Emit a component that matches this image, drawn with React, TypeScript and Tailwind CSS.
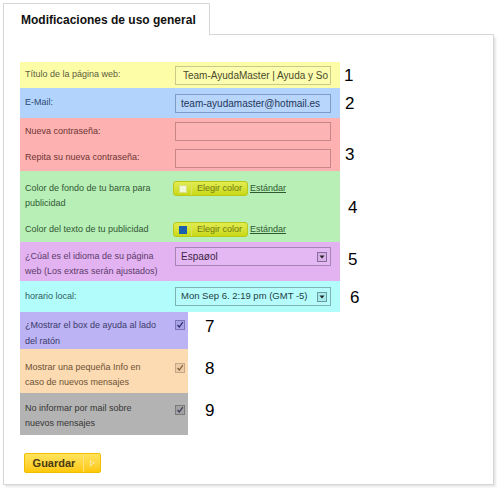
import React from "react";

const Field = ({ value, cls, pl = "pl-[5px]" }: { value?: string; cls: string; pl?: string }) => (
  <input
    readOnly
    value={value ?? ""}
    className={`w-[156px] h-[19px] border text-[10px] ${pl} pr-[2px] outline-none overflow-hidden ${cls}`}
  />
);

const SelectBox = ({ value, cls, arrow, size = "text-[10px]" }: { value: string; cls: string; arrow: string; size?: string }) => (
  <div className={`w-[156px] h-[19px] border flex items-center pl-[5px] pr-[3px] ${cls}`}>
    <span className={`flex-1 whitespace-nowrap overflow-hidden ${size}`}>{value}</span>
    <span className={`w-[10px] h-[10px] border flex items-center justify-center ${arrow}`}>
      <svg width="6" height="4" viewBox="0 0 6 4">
        <path d="M0.5 0.5 L5.5 0.5 L3 3.5 Z" fill="#222" />
      </svg>
    </span>
  </div>
);

const Check = ({ cls, mark }: { cls: string; mark: string }) => (
  <span className={`w-[10px] h-[10px] border flex items-center justify-center ${cls}`}>
    <svg width="8" height="8" viewBox="0 0 8 8">
      <path d="M1.5 4 L3.3 6 L6.8 1.2" fill="none" stroke={mark} strokeWidth="1.2" />
    </svg>
  </span>
);

const ColorButton = ({ swatch }: { swatch: string }) => (
  <div className="flex items-center">
    <div className="w-[75px] h-[15px] rounded-[3px] border border-[#b9c81a] bg-gradient-to-b from-[#e2ec4e] to-[#c9d912] flex items-center">
      <span className="w-[18px] h-full flex items-center justify-center border-r border-[#d9e560]">
        <span className={`w-[8px] h-[8px] ${swatch}`} />
      </span>
      <span className="flex-1 text-center text-[9px] text-[#6f7a10]">Elegir color</span>
    </div>
    <a className="ml-[2px] text-[9px] text-[#2f5a2f] underline">Estándar</a>
  </div>
);

const Num = ({ n, cls }: { n: string; cls: string }) => (
  <span className={`text-[17px] leading-none text-black ${cls}`}>{n}</span>
);

export default function App() {
  return (
    <div className="w-[500px] h-[492px] bg-white pt-[3px] pl-[3px] font-['Liberation_Sans',Arial,sans-serif]">
      <div className="flex">
        <div className="w-[207px] h-[32px] border border-b-0 border-[#d6d6d6] bg-white pl-[17px] pt-[1px] flex items-center">
          <span className="font-bold text-[12px] text-[#111]">Modificaciones de uso general</span>
        </div>
        <div className="w-[284px] border-b border-[#d6d6d6]" />
      </div>

      <div className="w-[491px] h-[450px] border border-t-0 border-[#d6d6d6] shadow-[2px_2px_2px_rgba(0,0,0,0.10)] pt-[27px] pl-[16px]">
        {/* 1 */}
        <div className="flex items-center">
          <div className="w-[320px] h-[26px] bg-[#fdfda8] flex items-center">
            <span className="w-[155px] pl-[5px] text-[9px] text-[#5c5c3c]">Título de la página web:</span>
            <Field value="Team-AyudaMaster | Ayuda y Soporte" pl="pl-[7px]" cls="border-[#c9c98a] bg-[#fdfdb0] text-[#4a4a2a]" />
          </div>
          <Num n="1" cls="ml-[4px]" />
        </div>

        {/* 2 */}
        <div className="flex items-center">
          <div className="w-[320px] h-[30px] bg-[#b2d3fc] flex items-center">
            <span className="w-[155px] pl-[5px] text-[9px] text-[#2d4a72]">E-Mail:</span>
            <Field value="team-ayudamaster@hotmail.es" cls="border-[#7d9cc8] bg-[#b8d6fc] text-[#1e3558]" />
          </div>
          <Num n="2" cls="ml-[5px]" />
        </div>

        {/* 3 */}
        <div className="flex">
          <div className="w-[320px] h-[53px] bg-[#fdb1b1] flex flex-col">
            <div className="h-[27px] flex items-center">
              <span className="w-[155px] pl-[5px] text-[9px] text-[#6e3434]">Nueva contraseña:</span>
              <Field cls="border-[#c98686] bg-[#fdb4b4]" />
            </div>
            <div className="h-[26px] flex items-center">
              <span className="w-[155px] pl-[5px] text-[9px] text-[#6e3434]">Repita su nueva contraseña:</span>
              <Field cls="border-[#c98686] bg-[#fdb4b4]" />
            </div>
          </div>
          <Num n="3" cls="ml-[5px] self-end mb-[8px]" />
        </div>

        {/* 4 */}
        <div className="flex items-center">
          <div className="w-[320px] h-[71px] bg-[#b7efb7] pt-[10px] flex flex-col">
            <div className="flex items-start">
              <span className="w-[155px] pl-[5px] text-[9px] leading-[15px] text-[#335833]">
                Color de fondo de tu barra para
                <br />
                publicidad
              </span>
              <div className="-ml-[2px]">
                <ColorButton swatch="bg-[#f2f8d6] border border-[#d8e08a]" />
              </div>
            </div>
            <div className="flex items-center mt-[11px]">
              <span className="w-[155px] pl-[5px] text-[9px] leading-[15px] text-[#335833]">
                Color del texto de tu publicidad
              </span>
              <div className="-ml-[2px]">
                <ColorButton swatch="bg-[#1b5fae]" />
              </div>
            </div>
          </div>
          <Num n="4" cls="ml-[8px] mt-[2px]" />
        </div>

        {/* 5 */}
        <div className="flex items-center">
          <div className="w-[320px] h-[39px] bg-[#e2b3f0] flex items-start">
            <span className="w-[155px] pl-[5px] pt-[7px] text-[9px] leading-[15px] text-[#5e3a6c]">
              ¿Cúal es el idioma de su página
              <br />
              web (Los extras serán ajustados)
            </span>
            <div className="mt-[5px]">
              <SelectBox value="Espaøol" cls="border-[#a784b6] bg-[#e4b8f2] text-[#3c2446]" arrow="border-[#8a6a9a] bg-[#d8b0e8]" />
            </div>
          </div>
          <Num n="5" cls="ml-[8px] -mt-[4px]" />
        </div>

        {/* 6 */}
        <div className="flex items-center">
          <div className="w-[320px] h-[31px] bg-[#b2fcfc] flex items-center">
            <span className="w-[155px] pl-[5px] text-[9px] text-[#2f5c5c]">horario local:</span>
            <SelectBox
              value="Mon Sep 6. 2:19 pm (GMT -5)"
              size="text-[9.5px]"
              cls="border-[#7cb4b4] bg-[#b6fcfc] text-[#1e3f3f]"
              arrow="border-[#6a9a9a] bg-[#a6ecec]"
            />
          </div>
          <Num n="6" cls="ml-[10px] mt-[2px]" />
        </div>

        {/* 7 */}
        <div className="flex items-center">
          <div className="w-[168px] h-[37px] bg-[#bbb3f3] pt-[5px] flex items-start">
            <span className="w-[155px] pl-[5px] text-[9px] leading-[16px] text-[#3c3a6c]">
              ¿Mostrar el box de ayuda al lado
              <br />
              del ratón
            </span>
            <span className="mt-[3px]">
              <Check cls="border-[#7c76b8] bg-[#aaa2e6]" mark="#2e2a70" />
            </span>
          </div>
          <Num n="7" cls="ml-[17px] -mt-[9px]" />
        </div>

        {/* 8 */}
        <div className="flex items-center">
          <div className="w-[168px] h-[44px] bg-[#fcdab2] pt-[11px] flex items-start">
            <span className="w-[155px] pl-[5px] text-[9px] leading-[15px] text-[#6c5234]">
              Mostrar una pequeña Info en
              <br />
              caso de nuevos mensajes
            </span>
            <span className="mt-[3px]">
              <Check cls="border-[#c2a888] bg-[#eccca6]" mark="#7a5c36" />
            </span>
          </div>
          <Num n="8" cls="ml-[17px] -mt-[6px]" />
        </div>

        {/* 9 */}
        <div className="flex items-center">
          <div className="w-[168px] h-[42px] bg-[#b3b3b3] pt-[8px] flex items-start">
            <span className="w-[155px] pl-[5px] text-[9px] leading-[15px] text-[#353535]">
              No informar por mail sobre
              <br />
              nuevos mensajes
            </span>
            <span className="mt-[4px]">
              <Check cls="border-[#7a7a7a] bg-[#a2a2a2]" mark="#3a3a5a" />
            </span>
          </div>
          <Num n="9" cls="ml-[17px] -mt-[7px]" />
        </div>

        {/* Guardar */}
        <div className="mt-[18px] ml-[4px] flex">
          <button className="h-[20px] w-[77px] flex rounded-[2px] border border-[#f0c000] bg-gradient-to-b from-[#ffe35a] to-[#ffc800]">
            <span className="w-[58px] h-full flex items-center justify-center font-bold text-[11px] text-[#4a3a10]">Guardar</span>
            <span className="flex-1 h-full border-l border-[#ffe27a] flex items-center justify-center">
              <svg width="7" height="9" viewBox="0 0 7 9">
                <path d="M1.5 1 L1.5 8 M1.5 2 L5.5 4 L1.5 6" fill="none" stroke="#f6e6a0" strokeWidth="1" />
              </svg>
            </span>
          </button>
        </div>
      </div>
    </div>
  );
}
